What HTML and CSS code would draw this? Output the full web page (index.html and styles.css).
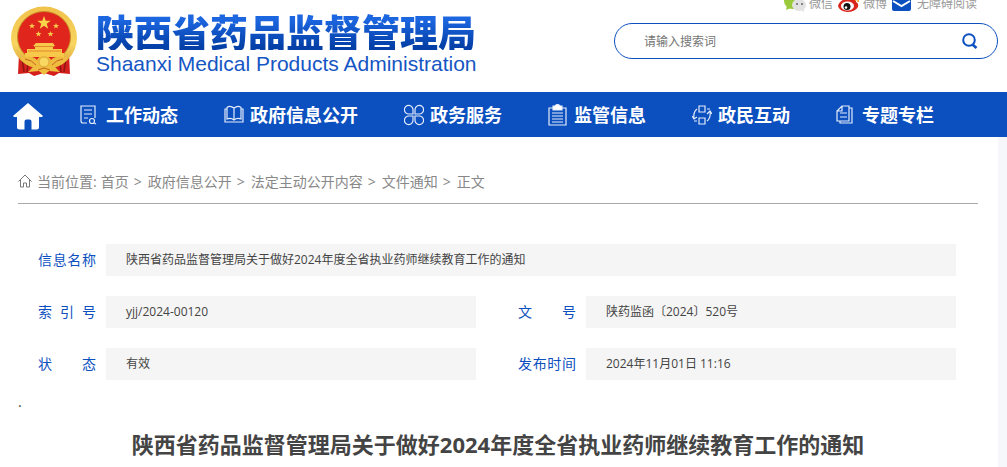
FILE: index.html
```html
<!DOCTYPE html>
<html lang="zh-CN">

<head>
    <meta charset="UTF-8">
    <title>陕西省药品监督管理局</title>
    <link rel="stylesheet" href="styles.css">
</head>

<body>
    <header class="header">
        <a class="logo" href="#">
            <svg class="emblem" viewBox="0 0 68 72">
                <defs>
                    <linearGradient id="gold" x1="0" y1="0" x2="0" y2="1">
                        <stop offset="0" stop-color="#f0c24a" />
                        <stop offset="0.6" stop-color="#f7d560" />
                        <stop offset="1" stop-color="#d99a2b" />
                    </linearGradient>
                </defs>
                <path d="M9 48l-1 20 11-1 5 3 10-3 10 3 5-3 11 1-1-20z" fill="#d3201c" />
                <path d="M12 52l2 14M18 58l-1 8M56 52l-2 14M50 58l1 8" stroke="#8f1512" stroke-width="1.5" />
                <ellipse cx="34" cy="32" rx="33" ry="31.500" fill="url(#gold)" />
                <ellipse cx="34" cy="31" rx="26.500" ry="25.500" fill="#e0251c" stroke="#c98a25" />
                <path d="M34 10l1.700 4.700 5 .1-4 3 1.500 4.900-4.200-2.900-4.200 2.900 1.500-4.900-4-3 5-.1z" fill="#f8d44a" />
                <g fill="#f8c84a">
                    <path d="M22 17l.8 2 2.200.1-1.700 1.300.6 2.100-1.900-1.200-1.900 1.200.6-2.100-1.700-1.300 2.200-.1z" />
                    <path d="M46 17l.8 2 2.200.1-1.700 1.300.6 2.100-1.900-1.200-1.900 1.200.6-2.100-1.700-1.300 2.200-.1z" />
                    <path d="M28.500 25l.8 2 2.200.1-1.700 1.300.6 2.100-1.900-1.200-1.900 1.200.6-2.100-1.700-1.300 2.200-.1z" />
                    <path d="M40.500 25l.8 2 2.200.1-1.700 1.300.6 2.100-1.900-1.200-1.900 1.200.6-2.100-1.700-1.300 2.200-.1z" />
                    <path d="M26 37h17l2 3h-2v3h9v4h2v4H15v-4h2v-4h8v-3h-2z" />
                </g>
                <path d="M24 40.500h20M18 45h33" stroke="#e08a2a" />
                <path d="M10 52q12-4 17 2 2-4 7-4t7 4q5-6 17-2-5 8-13 9l5 5-11-1-5 4-5-4-11 1 5-5q-8-1-13-9z" fill="#eebd3f" />
                <circle cx="34" cy="56" r="5" fill="#f8d861" stroke="#e0a63a" />
                <path d="M15 53q7 1 11 6M53 53q-7 1-11 6M28 64l6-2 6 2" fill="none" stroke="#c8641c" />
            </svg>
            <span class="logo-text">
                <span class="logo-cn">陕西省药品监督管理局</span>
                <span class="logo-en">Shaanxi Medical Products Administration</span>
            </span>
        </a>
        <div class="header-right">
            <div class="top-links">
                <a href="#">
                    <svg viewBox="0 0 22 20">
                        <ellipse cx="9" cy="9" rx="9" ry="8" fill="#9aca3c" />
                        <path d="M3 14l-1 4 5-2z" fill="#9aca3c" />
                        <ellipse cx="15" cy="13" rx="7" ry="6" fill="#e2e2e2" />
                        <path d="M17 18l3 2v-4z" fill="#e2e2e2" />
                        <circle cx="13" cy="12" r="1" fill="#666" />
                        <circle cx="18" cy="12" r="1" fill="#666" />
                    </svg>微信</a>
                <a href="#">
                    <svg viewBox="0 0 22 20">
                        <path d="M9 6q4-3 5 1 5-1 4 3 3 1 2 5-3 5-11 5-8-1-9-6 1-5 9-8z" fill="#d9261c" />
                        <ellipse cx="9.500" cy="14" rx="6.500" ry="4.500" fill="#fff" />
                        <circle cx="9" cy="14.500" r="3.500" fill="#111" />
                        <circle cx="8" cy="15.500" r="1.300" fill="#fff" />
                        <path d="M15 3q6 0 5 7M15 6q3 0 2.500 3" fill="none" stroke="#f39a1e" stroke-width="1.500" />
                    </svg>微博</a>
                <a href="#">
                    <svg viewBox="0 0 22 20">
                        <rect x="0" y="4" width="19" height="15" rx="2" fill="#0c50c0" />
                        <path d="M1 9l8.500 5L18 9" fill="none" stroke="#fff" stroke-width="2" />
                    </svg>无障碍阅读</a>
            </div>
            <form class="search">
                <input type="text" placeholder="请输入搜索词" aria-label="请输入搜索词">
                <button type="button" aria-label="搜索">
                    <svg viewBox="0 0 16 16" fill="none" stroke="#0c50c0" stroke-width="2">
                        <circle cx="7" cy="7" r="5.800" />
                        <path d="M10.500 11.500l4 3.500" stroke-width="2.600" />
                    </svg>
                </button>
            </form>
        </div>
    </header>

    <nav class="nav">
        <a class="home" href="#" aria-label="首页">
            <svg viewBox="0 0 30 27" fill="#fff">
                <path d="M15 0l14.500 12.500q.8 1.500-1 1.500H26v10q0 2.500-2.500 2.500H18.500v-8q0-2-2-2h-3q-2 0-2 2v8H6.500Q4 26.500 4 24V14H1.500q-1.800 0-1-1.500z" />
            </svg>
        </a>
        <ul>
            <li><a href="#">
                <svg viewBox="0 0 20 22">
                    <path d="M7 19H3q-2 0-2-2V2h14v12M4 6h8M4 10h8M4 14h4" />
                    <circle cx="12" cy="17" r="2.500" />
                    <path d="M14 19l2 1" />
                </svg>工作动态</a></li>
            <li><a href="#">
                <svg viewBox="0 0 20 22">
                    <path d="M10 4Q6 1 3 3.500V15q4-1.500 7 1 3-2.500 7-1V3.500Q14 1 10 4zV16M3 5H1v13h18V5h-2" />
                </svg>政府信息公开</a></li>
            <li><a href="#">
                <svg viewBox="0 0 20 22">
                    <path d="M9 10H5a4.300 4.300 0 1 1 4-4zM11 10h4a4.300 4.300 0 1 0-4-4zM9 12H5a4.300 4.300 0 1 0 4 4zM11 12h4a4.300 4.300 0 1 1-4 4z" />
                </svg>政务服务</a></li>
            <li><a href="#">
                <svg viewBox="0 0 20 22">
                    <path d="M5 4H1v17h17V4h-4M4 9h11M4 12h11M4 15h11M4 18h11" />
                    <path d="M5 2h2q2.500-3 5 0h2v4H5z" fill="#fff" />
                </svg>监管信息</a></li>
            <li><a href="#">
                <svg viewBox="0 0 20 22">
                    <path d="M7 2h6v6H7zM7 14h6v6H7zM5 5Q1 8 2 15M0 12l2 3 3-2M2 17h3M15 17q4-3 3-10M15 10l3-3 2 3M15 5h3" />
                </svg>政民互动</a></li>
            <li><a href="#">
                <svg viewBox="0 0 20 22">
                    <path d="M6 2h7v15H1V7zM6 2v5H1M13 4h3v15H4v-2M4 9h7M4 13h7" />
                </svg>专题专栏</a></li>
        </ul>
    </nav>

    <main class="page">
        <div class="crumbs">
            <svg viewBox="0 0 14 14" fill="none" stroke="#777">
                <path d="M.5 7.500L7 1l6.500 6.500M2.500 6v7h3V9h3v4h3V6" />
            </svg>
            <span>当前位置:</span>
            <a href="#">首页</a>
            <span class="sep">&gt;</span>
            <a href="#">政府信息公开</a>
            <span class="sep">&gt;</span>
            <a href="#">法定主动公开内容</a>
            <span class="sep">&gt;</span>
            <a href="#">文件通知</a>
            <span class="sep">&gt;</span>
            <span>正文</span>
        </div>

        <dl class="info">
            <div class="wide">
                <dt>信息名称</dt>
                <dd>陕西省药品监督管理局关于做好2024年度全省执业药师继续教育工作的通知</dd>
            </div>
            <div>
                <dt>索引号</dt>
                <dd>yjj/2024-00120</dd>
            </div>
            <div>
                <dt>文号</dt>
                <dd>陕药监函〔2024〕520号</dd>
            </div>
            <div>
                <dt>状态</dt>
                <dd>有效</dd>
            </div>
            <div>
                <dt>发布时间</dt>
                <dd>2024年11月01日 11:16</dd>
            </div>
        </dl>

        <p class="dot">.</p>
        <h1>陕西省药品监督管理局关于做好2024年度全省执业药师继续教育工作的通知</h1>
    </main>
</body>

</html>
```
FILE: styles.css
```css
* {
    box-sizing: border-box;
    margin: 0;
    padding: 0;
}

body {
    display: flex;
    flex-direction: column;
    min-height: 100vh;
    background: #f6f7fb;
    color: #444;
    font-family: "Open Sans", "Noto Sans CJK SC", sans-serif;
    font-size: 12px;
}

a {
    color: inherit;
    text-decoration: none;
}

ul {
    list-style: none;
}

/* 头部 */
.header {
    display: flex;
    justify-content: space-between;
    height: 92px;
    padding: 0 9px 0 10px;
    background: #fff;
    overflow: hidden;
}

.logo {
    display: flex;
    gap: 18px;
    padding-top: 6px;
}

.emblem {
    width: 68px;
    height: 72px;
}

.logo-text {
    display: flex;
    flex-direction: column;
    padding-top: 6px;
}

.logo-cn {
    font-family: "Noto Sans CJK SC", sans-serif;
    font-size: 38px;
    font-weight: 900;
    line-height: 38px;
    background: linear-gradient(#1c66e0 20%, #0440a8 90%);
    -webkit-background-clip: text;
    background-clip: text;
    color: transparent;
}

.logo-en {
    color: #1556c4;
    font-family: "Liberation Sans", Arial, sans-serif;
    font-size: 21px;
    line-height: 28px;
}

.header-right {
    width: 384px;
}

.top-links {
    display: flex;
    justify-content: flex-end;
    gap: 5px;
    height: 20px;
    margin-top: -8px;
    margin-bottom: 11px;
    padding-right: 21px;
    color: #999;
}

.top-links a {
    display: flex;
    gap: 3px;
    line-height: 24px;
}

.top-links svg {
    width: 22px;
    height: 20px;
}

.search {
    display: flex;
    align-items: center;
    height: 36px;
    padding: 0 19px 0 29px;
    border: 1px solid #0c50c0;
    border-radius: 18px;
}

.search input {
    flex: 1;
    border: 0;
    outline: none;
    background: none;
    font: inherit;
}

.search input::placeholder {
    color: #757575;
}

.search button {
    width: 16px;
    height: 16px;
    border: 0;
    background: none;
}

.search svg {
    display: block;
    width: 16px;
    height: 16px;
}

/* 导航 */
.nav {
    display: flex;
    align-items: center;
    height: 45px;
    padding-left: 13px;
    background: #0c50c0;
    color: #fff;
}

.home svg {
    display: block;
    width: 30px;
    height: 27px;
    margin-top: 4px;
}

.nav ul {
    display: flex;
    gap: 46px;
    margin-left: 37px;
}

.nav li a {
    display: flex;
    align-items: center;
    gap: 6px;
    font-size: 18px;
    font-weight: bold;
    line-height: 24px;
    white-space: nowrap;
}

.nav li svg {
    width: 20px;
    height: 22px;
    fill: none;
    stroke: #e4ecfa;
    stroke-width: 1.2;
}

/* 正文 */
.page {
    flex: 1;
    margin-right: 9px;
    padding: 24px 20px 0 18px;
    background: #fff;
}

.crumbs {
    display: flex;
    align-items: center;
    height: 43px;
    padding-bottom: 2px;
    border-bottom: 1px solid #aaa;
    color: #888;
    font-size: 14px;
}

.crumbs svg {
    width: 14px;
    height: 14px;
    margin-right: 5px;
}

.crumbs a:first-of-type {
    margin-left: 4px;
}

.crumbs .sep {
    margin: 0 6px 0 5px;
}

.info {
    display: grid;
    grid-template-columns: 1fr 1fr;
    gap: 20px 42px;
    padding: 40px 22px 0 20px;
}

.info div {
    display: flex;
    gap: 10px;
    line-height: 32px;
}

.info .wide {
    grid-column: 1 / 3;
}

.info dt {
    width: 58px;
    color: #0c50c0;
    font-size: 14px;
    text-align: justify;
    text-align-last: justify;
}

.info dd {
    flex: 1;
    height: 32px;
    padding-left: 20px;
    background: #f5f5f5;
}

.dot {
    margin-top: 10px;
    font-size: 14px;
    line-height: 24px;
}

h1 {
    margin-top: 14px;
    font-size: 22px;
    line-height: 32px;
    text-align: center;
}
```
